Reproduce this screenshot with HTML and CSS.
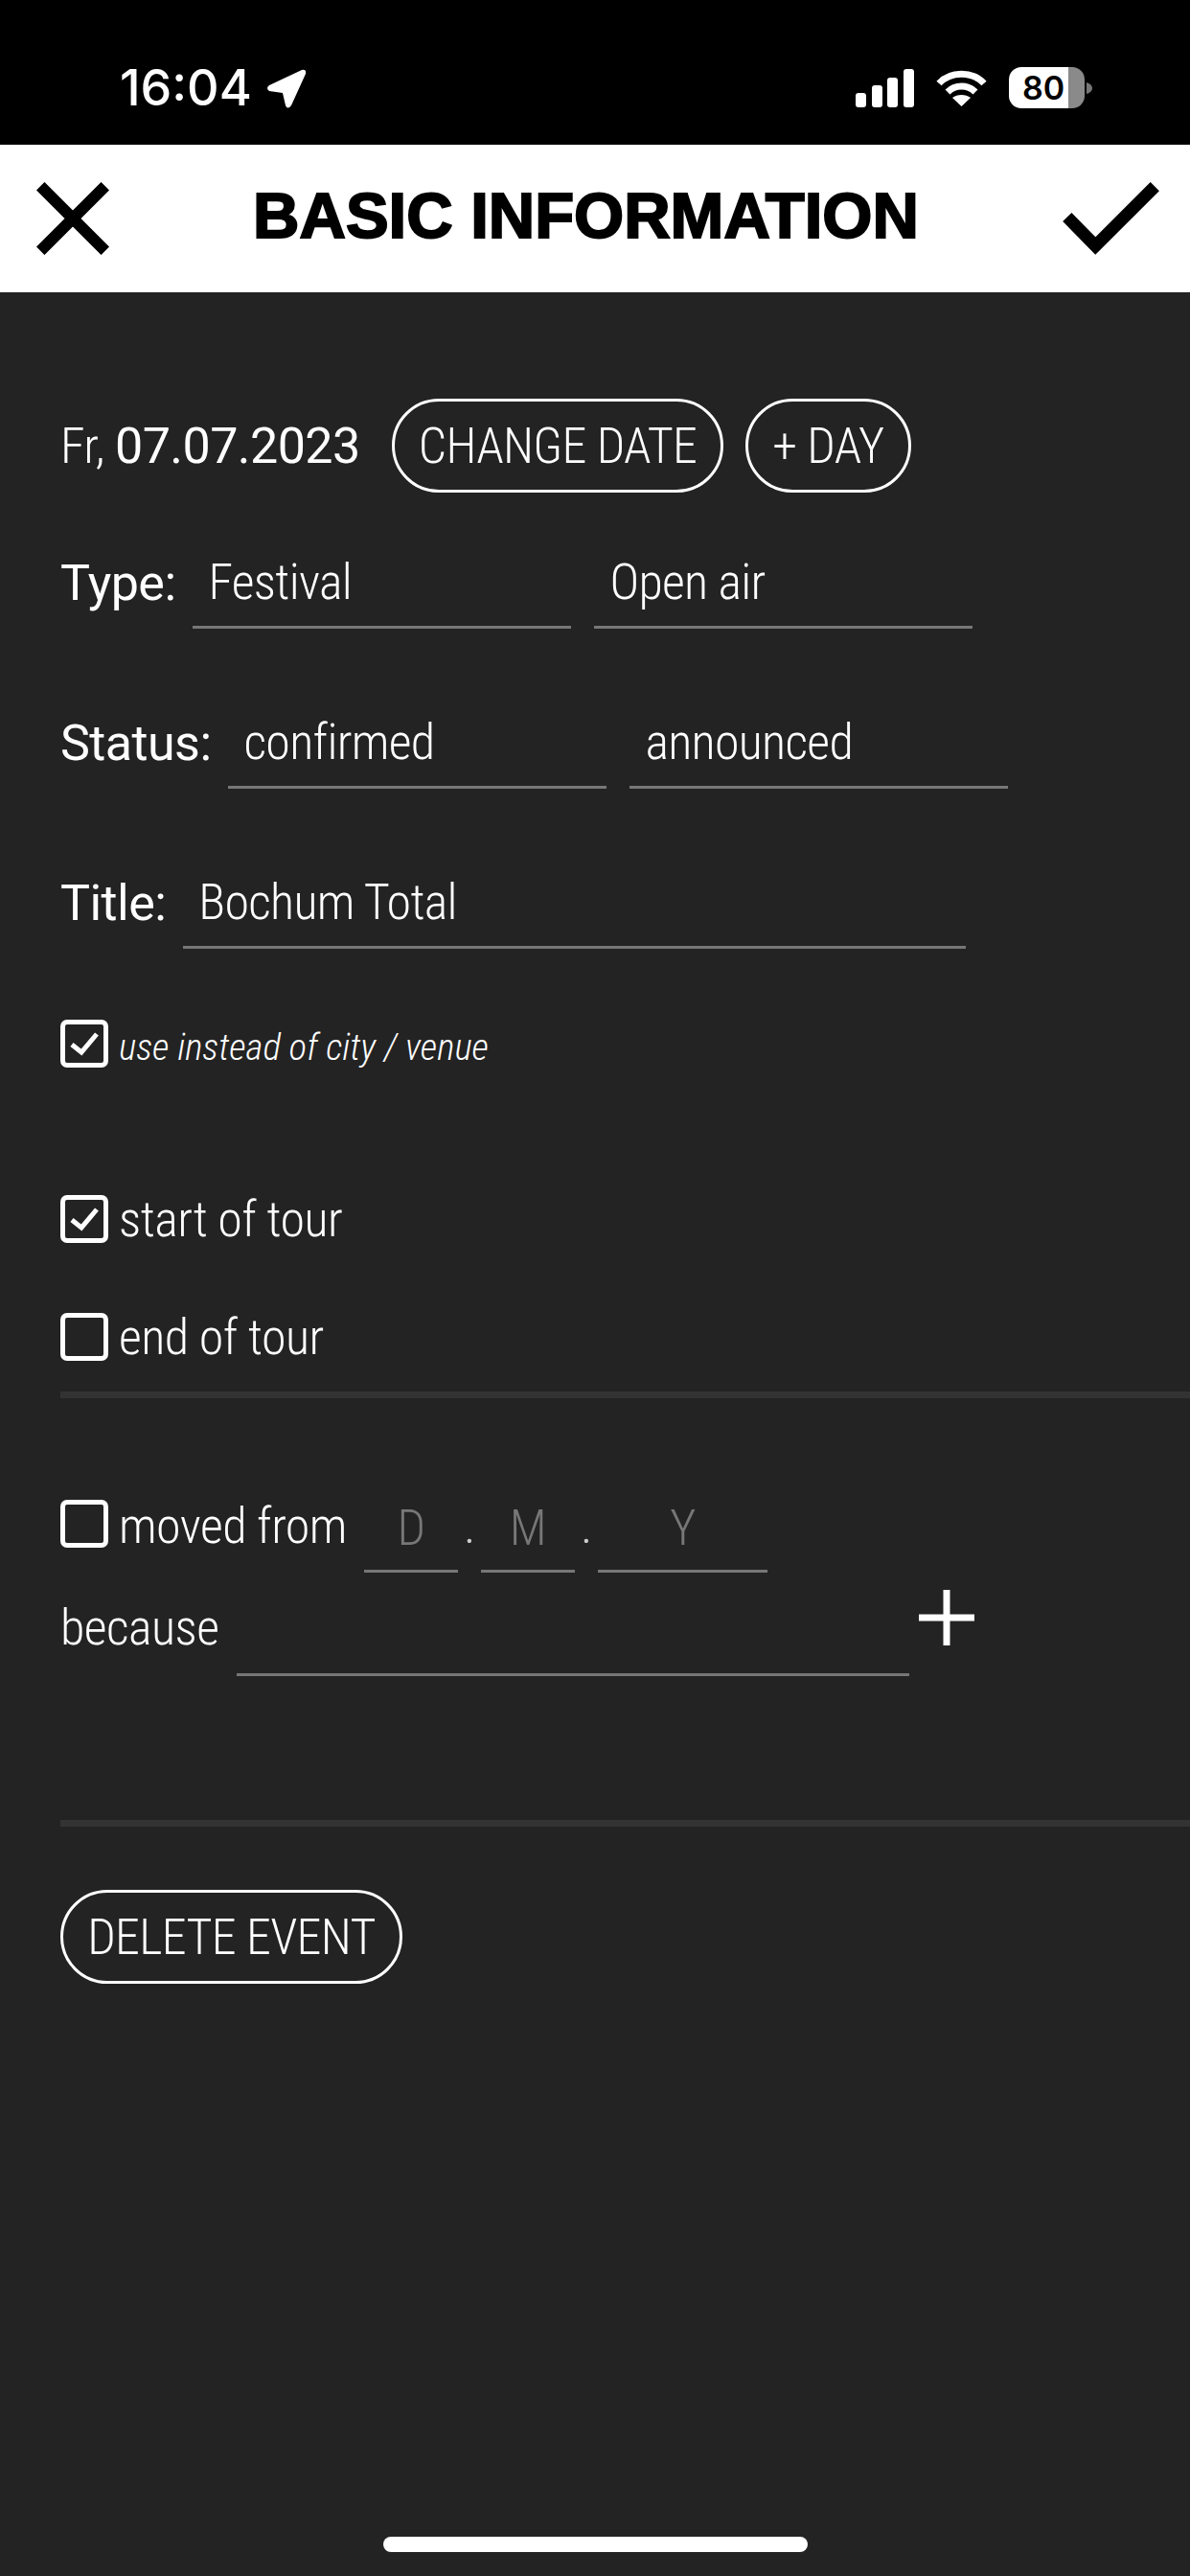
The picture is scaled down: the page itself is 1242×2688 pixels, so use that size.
FILE: index.html
```html
<!DOCTYPE html>
<html>
<head>
  <title>Basic Information</title>
  <link rel="stylesheet" href="styles.css">
</head>
<body>
  <div class="statusbar">
    <div class="clock">
      <span>16:04</span>
      <svg class="arrow" width="42" height="42" viewBox="0 0 42 42"><path d="M37 1 Q42 0 41 5 L26 38 Q22 43 20 38 L17 25 L3 23 Q-1 20 3 17 Z" fill="#fff"/></svg>
    </div>
    <div class="status-icons">
      <svg width="61" height="40" viewBox="0 0 61 40" fill="#fff">
        <rect x="0" y="25" width="11" height="15" rx="3"/>
        <rect x="17" y="17" width="11" height="23" rx="3"/>
        <rect x="33" y="9" width="11" height="31" rx="3"/>
        <rect x="50" y="0" width="11" height="40" rx="3"/>
      </svg>
      <svg width="53" height="40" viewBox="0 0 53 40" fill="none" stroke="#fff" stroke-width="7">
        <path d="M3 15 C15 2 38 2 50 15"/>
        <path d="M12 24 C20 16 33 16 41 24"/>
        <path d="M26.5 39 L17 30 C22 26 31 26 36 30 Z" fill="#fff" stroke="none"/>
      </svg>
      <div class="battery">
        <div class="battery-body"><span>80</span></div>
        <svg class="battery-nub" width="6" height="12" viewBox="0 0 6 12"><path d="M0 0 Q6 2 6 6 Q6 10 0 12 Z" fill="#777"/></svg>
      </div>
    </div>
  </div>

  <div class="header">
    <svg width="76" height="76" viewBox="0 0 76 76"><path d="M4.2 4.2 L71.8 71.8 M71.8 4.2 L4.2 71.8" stroke="#000" stroke-width="12" fill="none"/></svg>
    <h1>BASIC INFORMATION</h1>
    <svg width="102" height="76" viewBox="0 0 102 76"><path d="M4.8 36.5 L34.3 66.5 L96.3 4.7" stroke="#000" stroke-width="13" fill="none"/></svg>
  </div>

  <div class="content">
    <div class="date-row">
      <span class="date">Fr, <b>07.07.2023</b></span>
      <button class="pill">CHANGE DATE</button>
      <button class="pill">+ DAY</button>
    </div>

    <div class="row row-type">
      <span class="label">Type:</span>
      <div class="field">Festival</div>
      <div class="field">Open air</div>
    </div>
    <div class="row row-status">
      <span class="label">Status:</span>
      <div class="field">confirmed</div>
      <div class="field">announced</div>
    </div>
    <div class="row row-title">
      <span class="label">Title:</span>
      <div class="field field-wide">Bochum Total</div>
    </div>

    <div class="check-row check-use">
      <span class="box"><svg width="40" height="40" viewBox="0 0 40 40"><path d="M7 21 L17 29 L33 10" stroke="#fff" stroke-width="5" fill="none"/></svg></span>
      <span class="small-italic">use instead of city / venue</span>
    </div>
    <div class="check-row check-start">
      <span class="box"><svg width="40" height="40" viewBox="0 0 40 40"><path d="M7 21 L17 29 L33 10" stroke="#fff" stroke-width="5" fill="none"/></svg></span>
      <span>start of tour</span>
    </div>
    <div class="check-row check-end">
      <span class="box"></span>
      <span>end of tour</span>
    </div>
    <div class="divider divider-top"></div>

    <div class="moved-row">
      <span class="box"></span>
      <span class="moved-label">moved from</span>
      <div class="field date-part">D</div><span class="dot">.</span>
      <div class="field date-part">M</div><span class="dot">.</span>
      <div class="field date-part year">Y</div>
    </div>
    <div class="because-row">
      <span class="because-label">because</span>
      <div class="field because"></div>
      <svg class="plus" width="58" height="58" viewBox="0 0 58 58"><path d="M29 0 V58 M0 29 H58" stroke="#fff" stroke-width="7" fill="none"/></svg>
    </div>
    <div class="divider divider-bottom"></div>

    <button class="pill delete">DELETE EVENT</button>
  </div>

  <div class="home-bar"></div>
</body>
</html>
```
FILE: styles.css
```css
* { box-sizing: border-box; }
html, body { margin: 0; padding: 0; }
body { width: 1242px; height: 2688px; background-color: #232323; color: #fff; font-family: Roboto, "Liberation Sans", sans-serif; font-weight: 300; font-stretch: 75%; font-size: 52px; letter-spacing: -0.55px; position: relative; overflow: hidden; }

.statusbar { height: 151px; background: #000; display: flex; justify-content: space-between; padding: 70px 102px 0 125px; letter-spacing: 0; }
.clock { display: flex; align-items: flex-start; gap: 15px; font-family: Inter, sans-serif; font-stretch: normal; font-weight: 500; font-size: 52px; line-height: 44px; }
.arrow { margin-top: 2px; }
.status-icons { display: flex; align-items: flex-start; gap: 23px; padding-top: 2px; }
.battery { display: flex; align-items: center; margin-top: -2px; }
.battery-body { width: 79px; height: 43px; border-radius: 13px; background: linear-gradient(to right, #fff 79%, #8a8a8a 79%); color: #000; font-family: Inter, sans-serif; font-stretch: normal; font-weight: 600; font-size: 34px; line-height: 43px; padding-left: 14px; }
.battery-nub { margin-left: 2px; }

.header { height: 154px; background: #fff; color: #000; display: flex; align-items: center; justify-content: space-between; padding: 0 31px 0 38px; letter-spacing: 0; }
.header h1 { margin: 0 0 6px 0; font-family: "Liberation Sans", Arial, sans-serif; font-stretch: normal; font-weight: bold; font-size: 67px; line-height: 76px; -webkit-text-stroke: 2px #000; }

.content { padding: 111px 0 0 63px; }

.pill { height: 98px; padding: 0 25px; border: 3px solid #fff; border-radius: 49px; background: none; color: #fff; font: inherit; font-stretch: 75%; letter-spacing: -0.7px; }
.date-row { display: flex; align-items: center; gap: 23px; }
.date { margin-right: 10px; }
.date b { font-weight: 400; font-stretch: 90%; }

.row { display: flex; align-items: flex-end; gap: 24px; }
.label { font-weight: 400; font-stretch: 90%; margin-right: -6px; padding-bottom: 17px; }
.field { height: 78px; width: 395px; border-bottom: 3px solid #777; padding-left: 16px; line-height: 60px; letter-spacing: -0.7px; }
.field-wide { width: 817px; }
.row-type { height: 142px; }
.row-status { height: 167px; }
.row-title { height: 167px; }

.check-row { display: flex; align-items: center; gap: 11px; height: 50px; }
.box { width: 50px; height: 50px; flex: none; border: 5px solid #fff; border-radius: 7px; display: flex; align-items: center; justify-content: center; }
.small-italic { font-size: 39px; font-style: italic; letter-spacing: 0; padding-top: 8px; }
.check-use { margin-top: 74px; }
.check-start { margin-top: 133px; }
.check-end { margin-top: 73px; }

.divider { height: 7px; background: #333; }
.divider-top { margin-top: 32px; }
.divider-bottom { margin-top: 150px; }

.moved-row { display: flex; align-items: flex-start; margin-top: 106px; height: 76px; line-height: 56px; }
.moved-label { margin-left: 11px; }
.date-part { width: 98px; height: 76px; padding: 0; text-align: center; color: #777; line-height: 60px; }
.moved-row .moved-label { margin-right: 18px; }
.dot { width: 24px; text-align: center; color: #ccc; }
.year { width: 177px; }
.because-row { display: flex; align-items: flex-end; height: 108px; }
.because-label { padding-bottom: 20px; }
.because { width: 702px; height: 20px; margin-left: 19px; }
.plus { margin-left: 10px; margin-bottom: 32px; }

.delete { display: block; margin-top: 66px; width: 357px; padding: 0; }

.home-bar { position: absolute; left: 400px; top: 2647px; width: 443px; height: 16px; border-radius: 8px; background: #fff; }
```
